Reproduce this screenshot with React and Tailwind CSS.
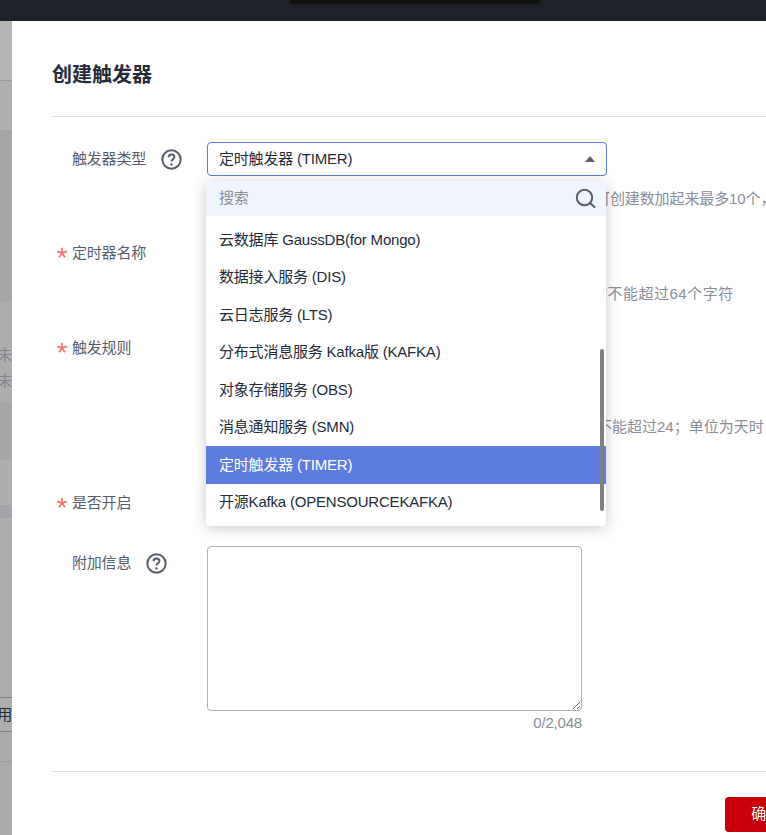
const fontStack = "font-['Liberation_Sans','Noto_Sans_CJK_SC',sans-serif] tracking-[-0.2px]";

const options = [
  "云数据库 GaussDB(for Mongo)",
  "数据接入服务 (DIS)",
  "云日志服务 (LTS)",
  "分布式消息服务 Kafka版 (KAFKA)",
  "对象存储服务 (OBS)",
  "消息通知服务 (SMN)",
  "定时触发器 (TIMER)",
  "开源Kafka (OPENSOURCEKAFKA)",
];

function HelpIcon() {
  return (
    <svg width="21" height="21" viewBox="0 0 21 21" fill="none" stroke="#575d6c" strokeWidth="2">
      <circle cx="10.5" cy="10.5" r="9.2" />
      <path d="M7.6 8.3c0-1.7 1.3-2.8 2.9-2.8s2.9 1.1 2.9 2.6c0 2.2-2.9 2.3-2.9 4.4" />
      <circle cx="10.5" cy="15.4" r="1.2" fill="#575d6c" stroke="none" />
    </svg>
  );
}

function SearchIcon() {
  return (
    <svg width="21" height="21" viewBox="0 0 21 21" fill="none" stroke="#575d6c" strokeWidth="2">
      <circle cx="9.5" cy="9.5" r="7.7" />
      <path d="M15 15l4.5 4" strokeLinecap="round" />
    </svg>
  );
}

function FormLabel({ text, required, help }) {
  return (
    <div className="w-[155px] shrink-0 flex items-center h-[34px] text-[15px] text-[#575d6c]">
      <span className="w-5 shrink-0 pl-1 h-[34px] flex items-center">
        {required && (
          <svg width="12" height="12" viewBox="0 0 12 12" fill="#f66f6a">
            <path d="M5.1 0.8h1.8l-.2 4 3.8-1.2.6 1.7-3.8 1.2 2.4 3.2-1.5 1.1L6 7.5l-2.2 3.3-1.5-1.1 2.4-3.2L.9 5.3l.6-1.7 3.8 1.2z" />
          </svg>
        )}
      </span>
      <span>{text}</span>
      {help && (
        <span className="ml-[15px]">
          <HelpIcon />
        </span>
      )}
    </div>
  );
}

function Hint({ text, pad }) {
  return (
    <div className={`ml-[155px] h-5 leading-5 text-[15px] text-[#8a8e99] whitespace-nowrap ${pad}`}>
      {text}
    </div>
  );
}

function SideStrip() {
  return (
    <div className="w-3 shrink-0 flex flex-col bg-[#adadad] overflow-hidden text-[15px]">
      <div className="h-[60px] bg-[#b5b5b5] border-b border-[#9d9d9d]" />
      <div className="h-[49px] bg-[#b0b0b0]" />
      <div className="h-[172px] bg-[#a7a7a9]" />
      <div className="h-[100px] bg-[#adadad] pt-[40px] text-[#80858d]">
        <div className="h-[26px] leading-[26px] flex justify-end whitespace-nowrap">未</div>
        <div className="h-[26px] leading-[26px] flex justify-end whitespace-nowrap">未</div>
      </div>
      <div className="h-[58px] bg-[#a6a6a8]" />
      <div className="h-[45px] bg-[#aeaeae]" />
      <div className="h-[13px] bg-[#a3a4a9]" />
      <div className="h-[179px] bg-[#adadad]" />
      <div className="h-[35px] border-y border-[#808080] leading-[33px] flex justify-end whitespace-nowrap text-[#252b3a]">
        用
      </div>
      <div className="flex-1 bg-[#ababab] pt-[29px]">
        <div className="border-t border-dashed border-[#999999] ml-0.5" />
      </div>
    </div>
  );
}

function TypeSelect() {
  return (
    <div className="relative w-[400px] h-[34px]">
      <div className="h-full border border-[#5e7ce0] rounded-sm pl-[11px] pr-[11px] flex items-center justify-between text-[15px] text-[#252b3a]">
        <span>定时触发器 (TIMER)</span>
        <span className="w-0 h-0 border-x-[5px] border-x-transparent border-b-[6px] border-b-[#575d6c]" />
      </div>
      <div className="absolute z-10 left-[-1px] top-[39px] w-[400px] h-[345px] bg-white rounded-sm shadow-[0_2px_14px_rgba(0,0,0,0.22)] overflow-hidden">
        <div className="h-[35px] bg-[#f0f4fc] pl-[13px] pr-[10px] flex items-center justify-between text-[15px] text-[#8a8e99]">
          <span>搜索</span>
          <SearchIcon />
        </div>
        <div className="pt-[5px]">
          {options.map((item) => {
            const active = item.startsWith("定时");
            return (
              <div
                key={item}
                className={`h-[37.5px] pl-[13px] flex items-center text-[15px] whitespace-nowrap ${
                  active ? "bg-[#5e7ce0] text-white" : "text-[#252b3a]"
                }`}
              >
                {item}
              </div>
            );
          })}
        </div>
        <div className="absolute left-[394px] top-[168px] w-1 h-[162px] rounded-full bg-[#808080]" />
      </div>
    </div>
  );
}

export default function App() {
  return (
    <div className={`w-[766px] h-[835px] overflow-hidden flex flex-col bg-white ${fontStack}`}>
      {/* top bar */}
      <div className="h-[21px] shrink-0 bg-[#1f2129]">
        <div className="ml-[290px] w-[250px] h-1 rounded-br-sm bg-[#121212]" />
      </div>

      <div className="flex-1 flex min-h-0">
        <SideStrip />

        {/* dialog */}
        <div className="flex-1 min-w-0 overflow-hidden bg-white pl-10">
          <div className="h-[96px] border-b border-[#dfe1e6] pt-10">
            <h1 className="text-xl leading-7 font-bold tracking-normal text-[#252b3a]">创建触发器</h1>
          </div>

          <div className="pt-[25px]">
            <div className="flex">
              <FormLabel text="触发器类型" help />
              <TypeSelect />
            </div>
            <div className="mt-[13px]">
              <Hint text="可创建数加起来最多10个，" pad="pl-[388px] tracking-[-0.1px]" />
            </div>

            <div className="flex mt-[27px]">
              <FormLabel text="定时器名称" required />
              <div className="w-[399px] h-[34px] border border-[#adb0b8] rounded-sm" />
            </div>
            <div className="mt-[14px]">
              <Hint text="度不能超过64个字符" pad="pl-[385px] tracking-[0.5px]" />
            </div>

            <div className="flex mt-[27px] h-[86px]">
              <FormLabel text="触发规则" required />
            </div>
            <Hint text="不能超过24；单位为天时，" pad="pl-[390px] tracking-normal" />

            <div className="flex mt-[49px]">
              <FormLabel text="是否开启" required />
            </div>

            <div className="flex mt-[26px]">
              <FormLabel text="附加信息" help />
              <div className="w-[375px]">
                <textarea
                  readOnly
                  className="block w-[375px] h-[165px] border border-[#adb0b8] rounded-sm outline-none resize"
                />
                <div className="mt-[2px] h-5 leading-5 text-[15px] text-right text-[#8a8e99]">0/2,048</div>
              </div>
            </div>
          </div>

          <div className="mt-[38px] border-t border-[#dfe1e6] pt-[25px] pl-[673px]">
            <button className="block w-[82px] h-[35px] rounded-sm bg-[#c7000b] text-[15px] text-white">
              确定
            </button>
          </div>
        </div>
      </div>
    </div>
  );
}
